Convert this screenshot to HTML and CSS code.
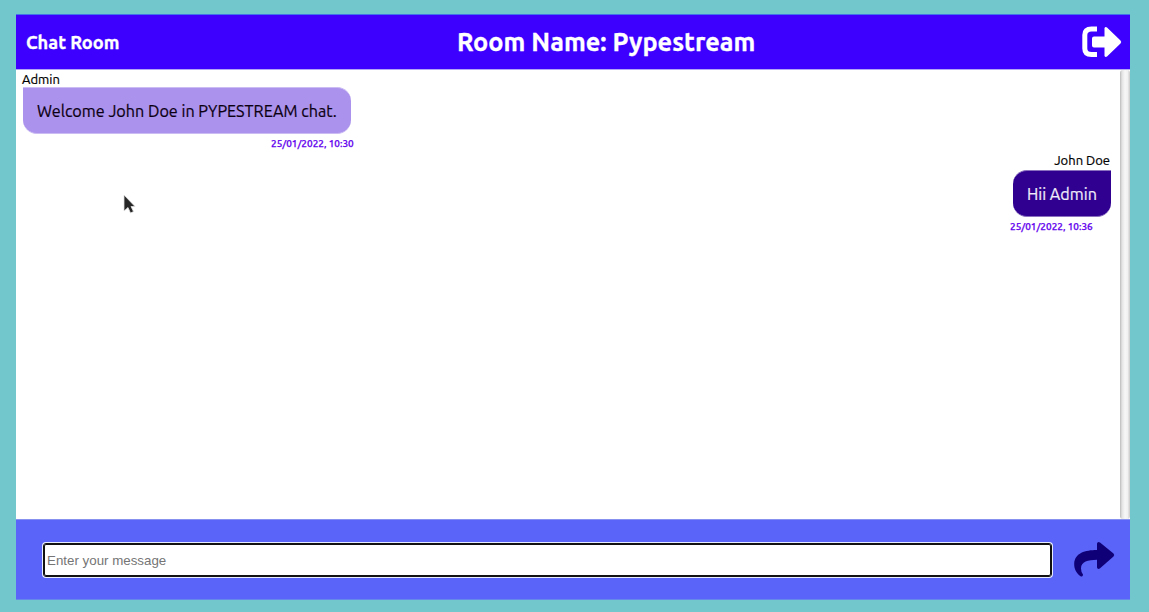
FILE: index.html
```html
<!DOCTYPE html>
<html lang="en">
<head>
<meta charset="utf-8">
<title>Chat Room</title>
<link rel="stylesheet" href="styles.css">
</head>
<body>
<main class="room">
  <header class="topbar">
    <span class="brand">Chat Room</span>
    <h1 class="title"><span>Room Name: Pypestream</span></h1>
    <button class="leave" aria-label="Leave room">
      <svg width="41" height="32" viewBox="0 0 41 32"><path d="M16 3H10.500Q3.800 3 3.800 9V22.500Q3.800 28.500 10.500 28.500H16" fill="none" stroke="#fff" stroke-width="5"/><path d="M13 10.500H23.500V2Q24.500 .5 26 1.500L39.500 14.500Q41 16 39.500 17.500L26 30.500Q24.500 31.500 23.500 30V21.500H13Q11 21.500 11 19.500V12.500Q11 10.500 13 10.500Z" fill="#fff"/></svg>
    </button>
  </header>
  <div class="chat">
    <section class="messages">
      <article class="message">
        <div class="author"><span>Admin</span></div>
        <div class="bubble"><span>Welcome John Doe in PYPESTREAM chat.</span></div>
        <time class="time"><span>25/01/2022, 10:30</span></time>
      </article>
      <article class="message own">
        <div class="author"><span>John Doe</span></div>
        <div class="bubble"><span>Hii Admin</span></div>
        <time class="time"><span>25/01/2022, 10:36</span></time>
      </article>
    </section>
    <div class="scrollbar"></div>
  </div>
  <form class="composer">
    <input class="field" type="text" placeholder="Enter your message">
    <button class="send" type="button" aria-label="Send">
      <svg width="42" height="38" viewBox="0 0 42 38"><path d="M24 9V2.500Q24.600 0 27 1.500L40.500 12.500Q42 14 40.500 15.500L26.800 27.500Q24.500 28.700 24 26.500V18.800C15 19 8 20.500 8 27.500Q8 31 10 33.500Q10 36.200 7.500 35.200C3 32 1 27.500 1.200 22.500C2 12 12 9 24 9Z" fill="#100077"/></svg>
    </button>
  </form>
</main>
<svg class="pointer" width="14" height="22" viewBox="0 0 14 22"><path d="M1 1V17L5 13.500L7.500 19L10.500 17.500L8 12.500H12Z" fill="#262626" stroke="#e0e0e0" stroke-width=".8"/></svg>
</body>
</html>
```
FILE: styles.css
```css
* { box-sizing: border-box; }
body {
  margin: 0;
  padding: 14px 19px 0 16px;
  height: 612px;
  overflow: hidden;
  background: #72c7cc;
  font-family: Ubuntu, "Noto Sans", sans-serif;
}
span { white-space: nowrap; }
button { padding: 0; border: 0; background: none; }
svg { display: block; }
.room { height: 586px; display: flex; flex-direction: column; background: #fff; }
.topbar {
  height: 56px;
  flex: none;
  display: grid;
  grid-template-columns: 441px 1fr 49px;
  align-items: center;
  border-top: 1px solid #4074e8;
  border-bottom: 1px solid #b3a6f5;
  background: #3d00ff;
  color: #fff;
  -webkit-text-stroke: .3px;
}
.brand { padding-left: 10px; font-size: 18.200px; font-weight: 700; }
.title { margin: 0; font-size: 25.300px; line-height: 34px; font-weight: 700; }
.chat { height: 449px; flex: none; display: flex; }
.messages { flex: 1; padding: 1px 9px 0 7px; }
.message { width: 328px; }
.author { height: 16px; line-height: 16px; font-size: 13px; margin-left: -1px; color: #000; -webkit-text-stroke: .2px; }
.bubble {
  height: 47px;
  padding: 0 14px;
  line-height: 47px;
  font-size: 16.180px;
  border-top: 1px solid #cbbcf3;
  border-bottom: 1px solid #cbbcf3;
  border-radius: 0 14px 14px 14px;
  background: #ab92ec;
  color: #0b0012;
  -webkit-text-stroke: .2px;
}
.time { display: block; height: 18px; line-height: 19px; font-size: 10px; font-weight: 500; color: #6200ee; padding-left: 248px; -webkit-text-stroke: .25px; }
.own { width: 98px; margin-left: auto; }
.own .author { height: 18px; line-height: 17px; text-align: right; margin: 0 1px 0 0; }
.own .bubble { background: #300091; color: #f0edfa; border-color: #8a70be; border-radius: 14px 0 14px 14px; }
.own .time { padding: 0; margin-left: -3px; }
.scrollbar {
  width: 10px;
  border-radius: 3px;
  background: linear-gradient(90deg, #bbb, #e3e3e3 20%, #f7f7f7 50%, #f1f1f1 75%, #c9c9c9);
}
.composer {
  height: 81px;
  flex: none;
  display: flex;
  align-items: center;
  padding: 1px 15px 0 28px;
  border-top: 1px solid #8792f0;
  border-bottom: 1px solid #6489ea;
  background: #5a64f8;
}
.field {
  width: 1007px;
  height: 32px;
  padding: 1px 2px;
  border: 1px solid #111;
  border-radius: 2px;
  outline: 1px solid #111;
  box-shadow: 0 0 0 2px #e8ecff;
  font: 13.333px "Liberation Sans", sans-serif;
}
.field::placeholder { color: #757575; }
.send { margin-left: 22px; }
.pointer { position: absolute; left: 123px; top: 194px; }
```
